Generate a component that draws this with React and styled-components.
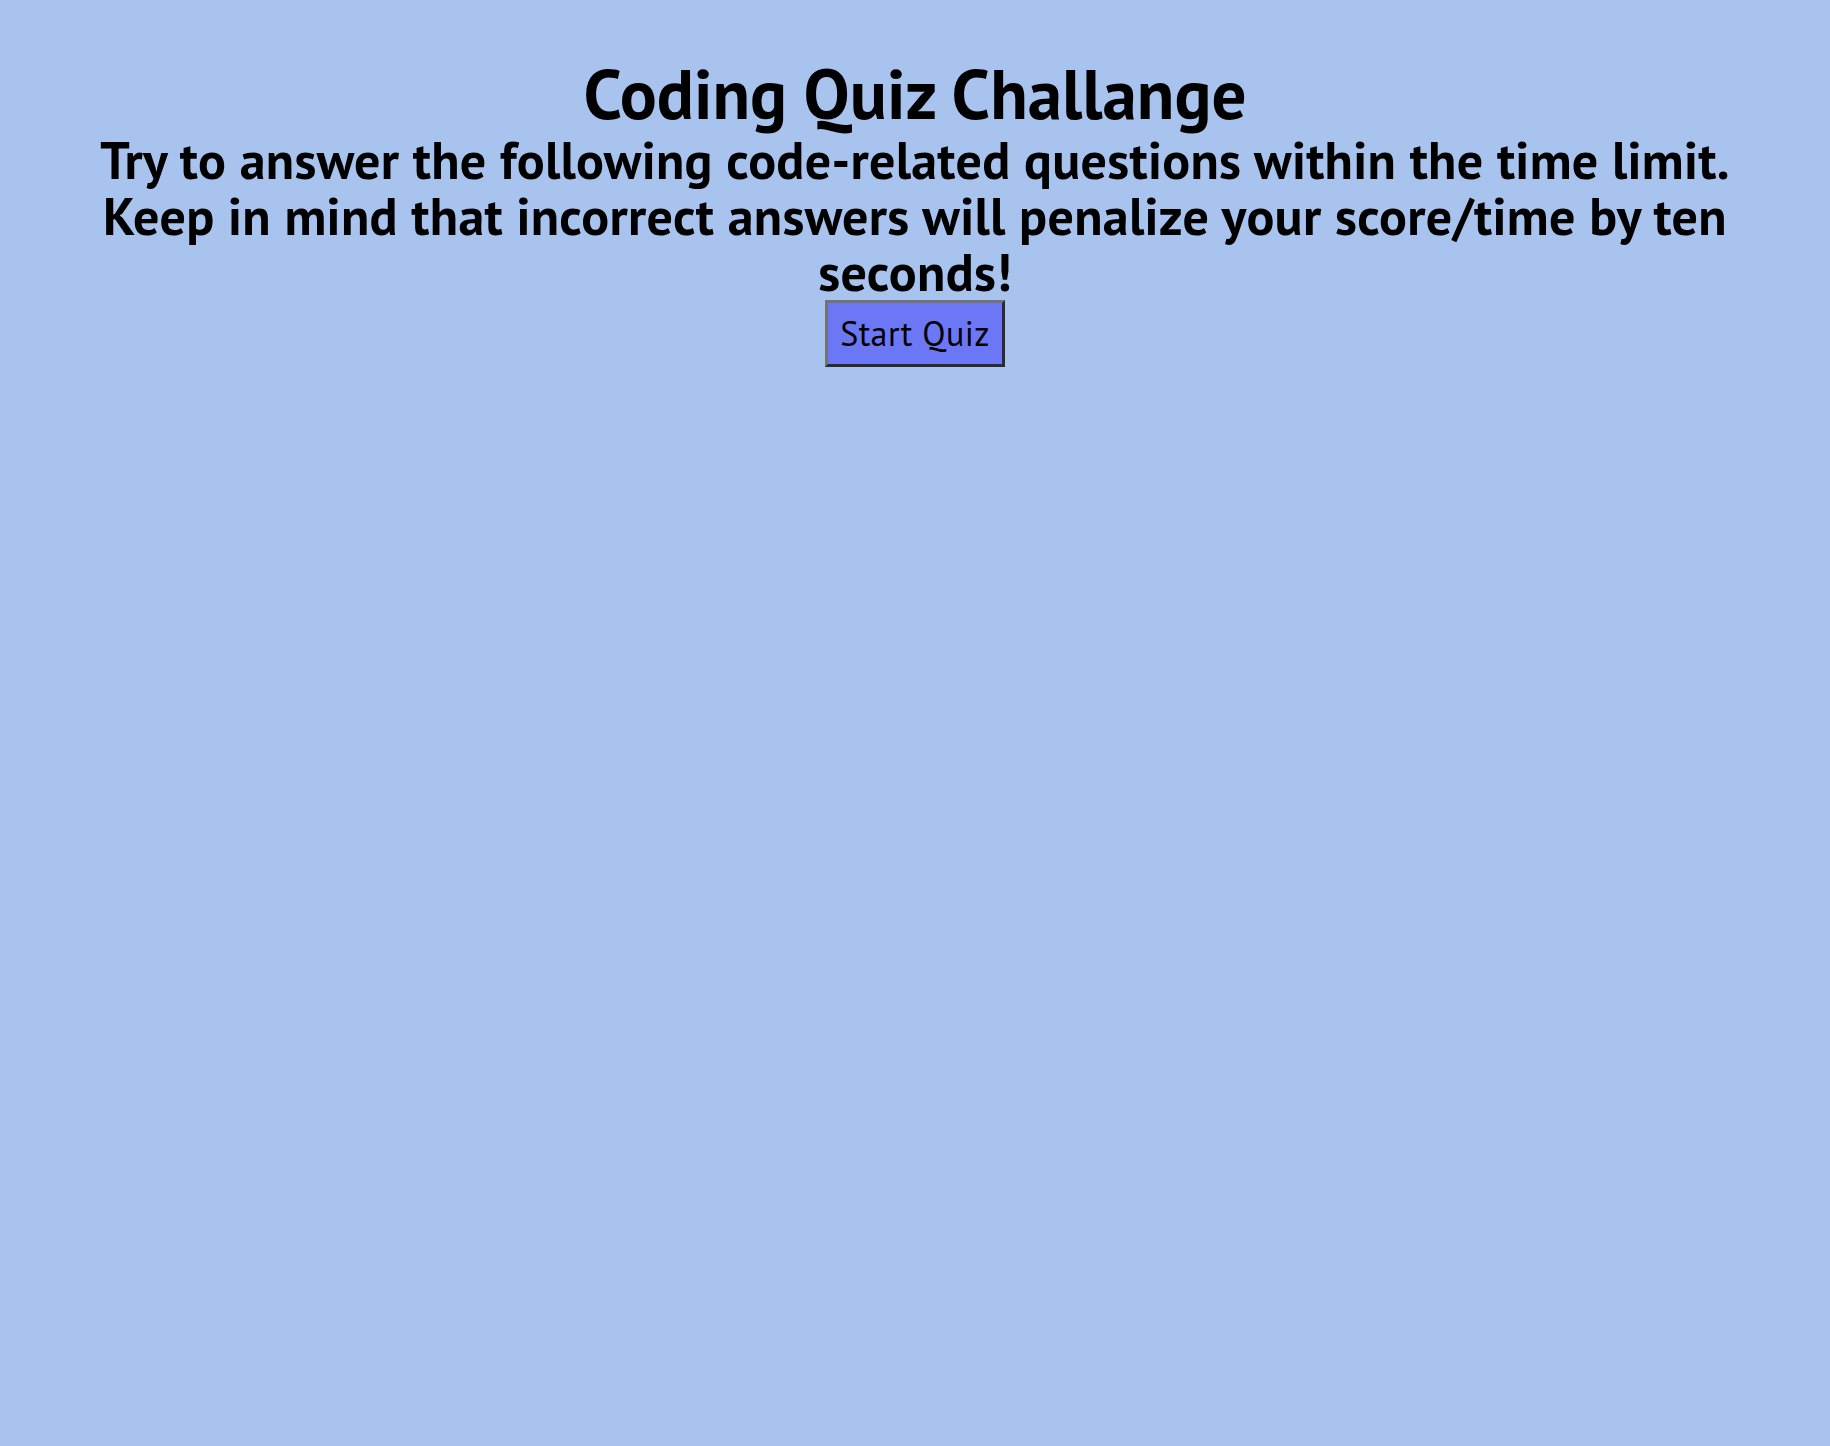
import React from 'react';
import styled, { createGlobalStyle } from 'styled-components';

const GlobalStyle = createGlobalStyle`
    html, body {
        margin: 0;
        min-height: 100%;
        background: #a8c3ee;
    }
    body {
        font-family: "PT Sans", "Noto Sans", sans-serif;
        color: #000;
    }
`

const App = () => {
    return (
        <>
            <GlobalStyle />
            <Intro>
                <Title>Coding Quiz Challange</Title>
                <Blurb>
                    Try to answer the following code-related questions within the time limit.
                    <br />
                    Keep in mind that incorrect answers will penalize your score/time by ten seconds!
                </Blurb>
                <StartButton>Start Quiz</StartButton>
            </Intro>
        </>
    )
}

const Intro = styled.main`
    display: flex;
    flex-direction: column;
    align-items: center;
    text-align: center;
    padding: 56px 60px 0;
`

const Title = styled.h1`
    font-size: 69px;
    font-weight: bold;
    line-height: 76px;
    margin: 0;
`

const Blurb = styled.h2`
    font-size: 52px;
    font-weight: bold;
    letter-spacing: 0.3px;
    line-height: 56px;
    margin: 0;
`

const StartButton = styled.button`
    font-family: inherit;
    font-size: 34px;
    letter-spacing: 0.4px;
    line-height: 41px;
    color: #000;
    background: #6b77f5;
    border: 3px solid;
    border-color: #737373 #2b2b2b #2b2b2b #737373;
    padding: 10px 12px;
    cursor: pointer;
`

export default App;
